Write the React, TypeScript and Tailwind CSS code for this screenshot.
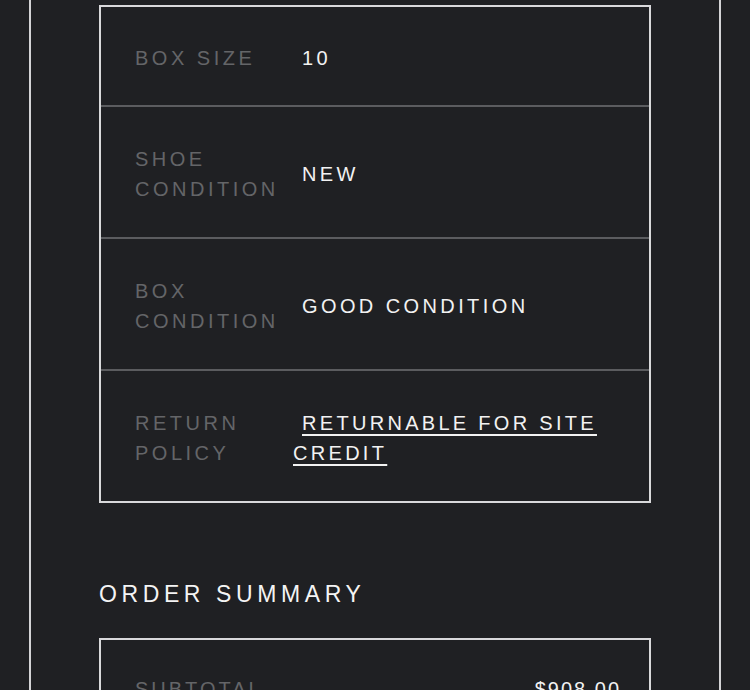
import React from 'react';

const rows = [
  { label: ['BOX SIZE'], value: '10' },
  { label: ['SHOE', 'CONDITION'], value: 'NEW' },
  { label: ['BOX', 'CONDITION'], value: 'GOOD CONDITION' },
];

const App = () => {
  return (
    <div className="min-h-[690px] bg-[#1f2023] font-['Liberation_Sans',Arial,sans-serif]">
      <div className="mx-[29px] min-h-[690px] border-x-2 border-[#d4d4d6] px-[68px] pt-[5px]">
        {/* product details table */}
        <div className="border-2 border-[#d9d9db]">
          {rows.map((row, i) => (
            <div
              key={i}
              className={`flex items-center border-b-2 border-[#5b5c5f] px-[34px] pt-[3px] ${
                row.label.length > 1 ? 'h-[132px]' : 'h-[100px]'
              }`}
            >
              <div className="w-[167px] shrink-0 text-[20px] leading-[30px] tracking-[3.5px] text-[#646568]">
                {row.label.map((l) => (
                  <div key={l}>{l}</div>
                ))}
              </div>
              <div className="text-[20px] leading-[30px] tracking-[3.4px] text-[#f2f2f2]">{row.value}</div>
            </div>
          ))}
          <div className="flex h-[130px] items-center px-[34px] pt-[3px]">
            <div className="w-[158px] shrink-0 text-[20px] leading-[30px] tracking-[3.5px] text-[#646568]">
              <div>RETURN</div>
              <div>POLICY</div>
            </div>
            <div className="w-[320px] indent-[9px] text-[20px] leading-[30px] tracking-[3.3px] text-[#f2f2f2]">
              <a href="#" className="underline decoration-[2px] underline-offset-[4px]">
                RETURNABLE FOR SITE CREDIT
              </a>
            </div>
          </div>
        </div>

        <h2 className="mt-[75px] text-[23px] leading-[32px] tracking-[4.6px] text-[#f4f4f4]">ORDER SUMMARY</h2>

        {/* order summary table */}
        <div className="mt-[28px] border-2 border-[#d9d9db]">
          <div className="flex items-center justify-between py-[34px] pl-[34px] pr-[28px] text-[20px] leading-[30px]">
            <span className="tracking-[3px] text-[#646568]">SUBTOTAL</span>
            <span className="tracking-[2px] text-[#f2f2f2]">$908.00</span>
          </div>
        </div>
      </div>
    </div>
  );
};

export default App;
